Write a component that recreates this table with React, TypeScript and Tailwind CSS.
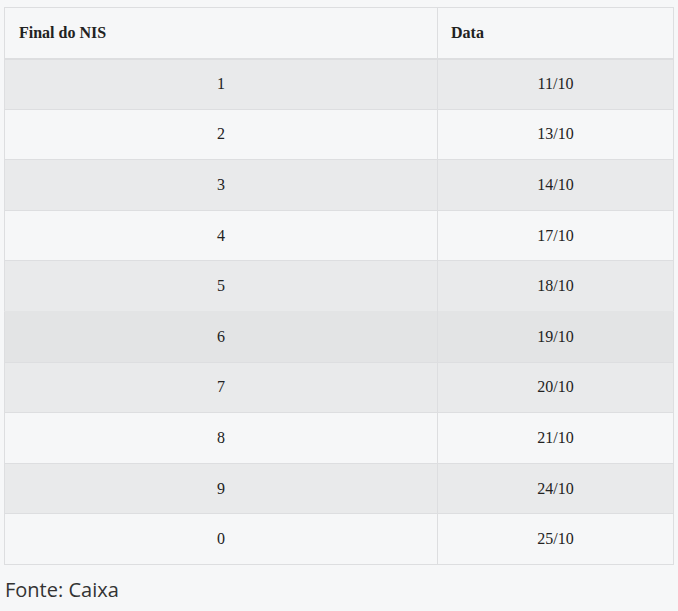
const ROWS = [
  { nis: "1", data: "11/10", tone: "dark" },
  { nis: "2", data: "13/10", tone: "light" },
  { nis: "3", data: "14/10", tone: "dark" },
  { nis: "4", data: "17/10", tone: "light" },
  { nis: "5", data: "18/10", tone: "dark" },
  { nis: "6", data: "19/10", tone: "hover" },
  { nis: "7", data: "20/10", tone: "dark" },
  { nis: "8", data: "21/10", tone: "light" },
  { nis: "9", data: "24/10", tone: "dark" },
  { nis: "0", data: "25/10", tone: "light" },
];

const toneClass: Record<string, string> = {
  dark: "bg-[#e9eaeb]",
  light: "bg-[#f6f7f8]",
  hover: "bg-[#e3e4e5]",
};

export default function App() {
  return (
    <div className="min-h-[611px] w-[678px] bg-[#f6f7f8] px-[4px] pt-[7px]">
      <table className="w-[670px] table-fixed border-collapse border border-[#dddee0] font-['Liberation_Serif',serif] text-[16px] text-[#222]">
        <colgroup>
          <col className="w-[433px]" />
          <col className="w-[236px]" />
        </colgroup>
        <thead>
          <tr className="h-[51px] border-b-2 border-[#dddee0] bg-[#f6f7f8]">
            <th className="border-r border-[#dddee0] px-[14px] text-left font-bold">Final do NIS</th>
            <th className="px-[13px] text-left font-bold">Data</th>
          </tr>
        </thead>
        <tbody>
          {ROWS.map((r) => (
            <tr
              key={r.nis}
              className={`h-[50.6px] border-t border-[#dddee0] ${toneClass[r.tone]} ${
                r.tone === "hover" ? "border-[#e3e4e5]" : ""
              }`}
            >
              <td className="border-r border-[#dddee0] text-center">{r.nis}</td>
              <td className="text-center">{r.data}</td>
            </tr>
          ))}
        </tbody>
      </table>
      <p className="mt-[10px] pl-[1px] font-['Open_Sans',sans-serif] text-[20px] text-[#333]">
        Fonte: Caixa
      </p>
    </div>
  );
}
